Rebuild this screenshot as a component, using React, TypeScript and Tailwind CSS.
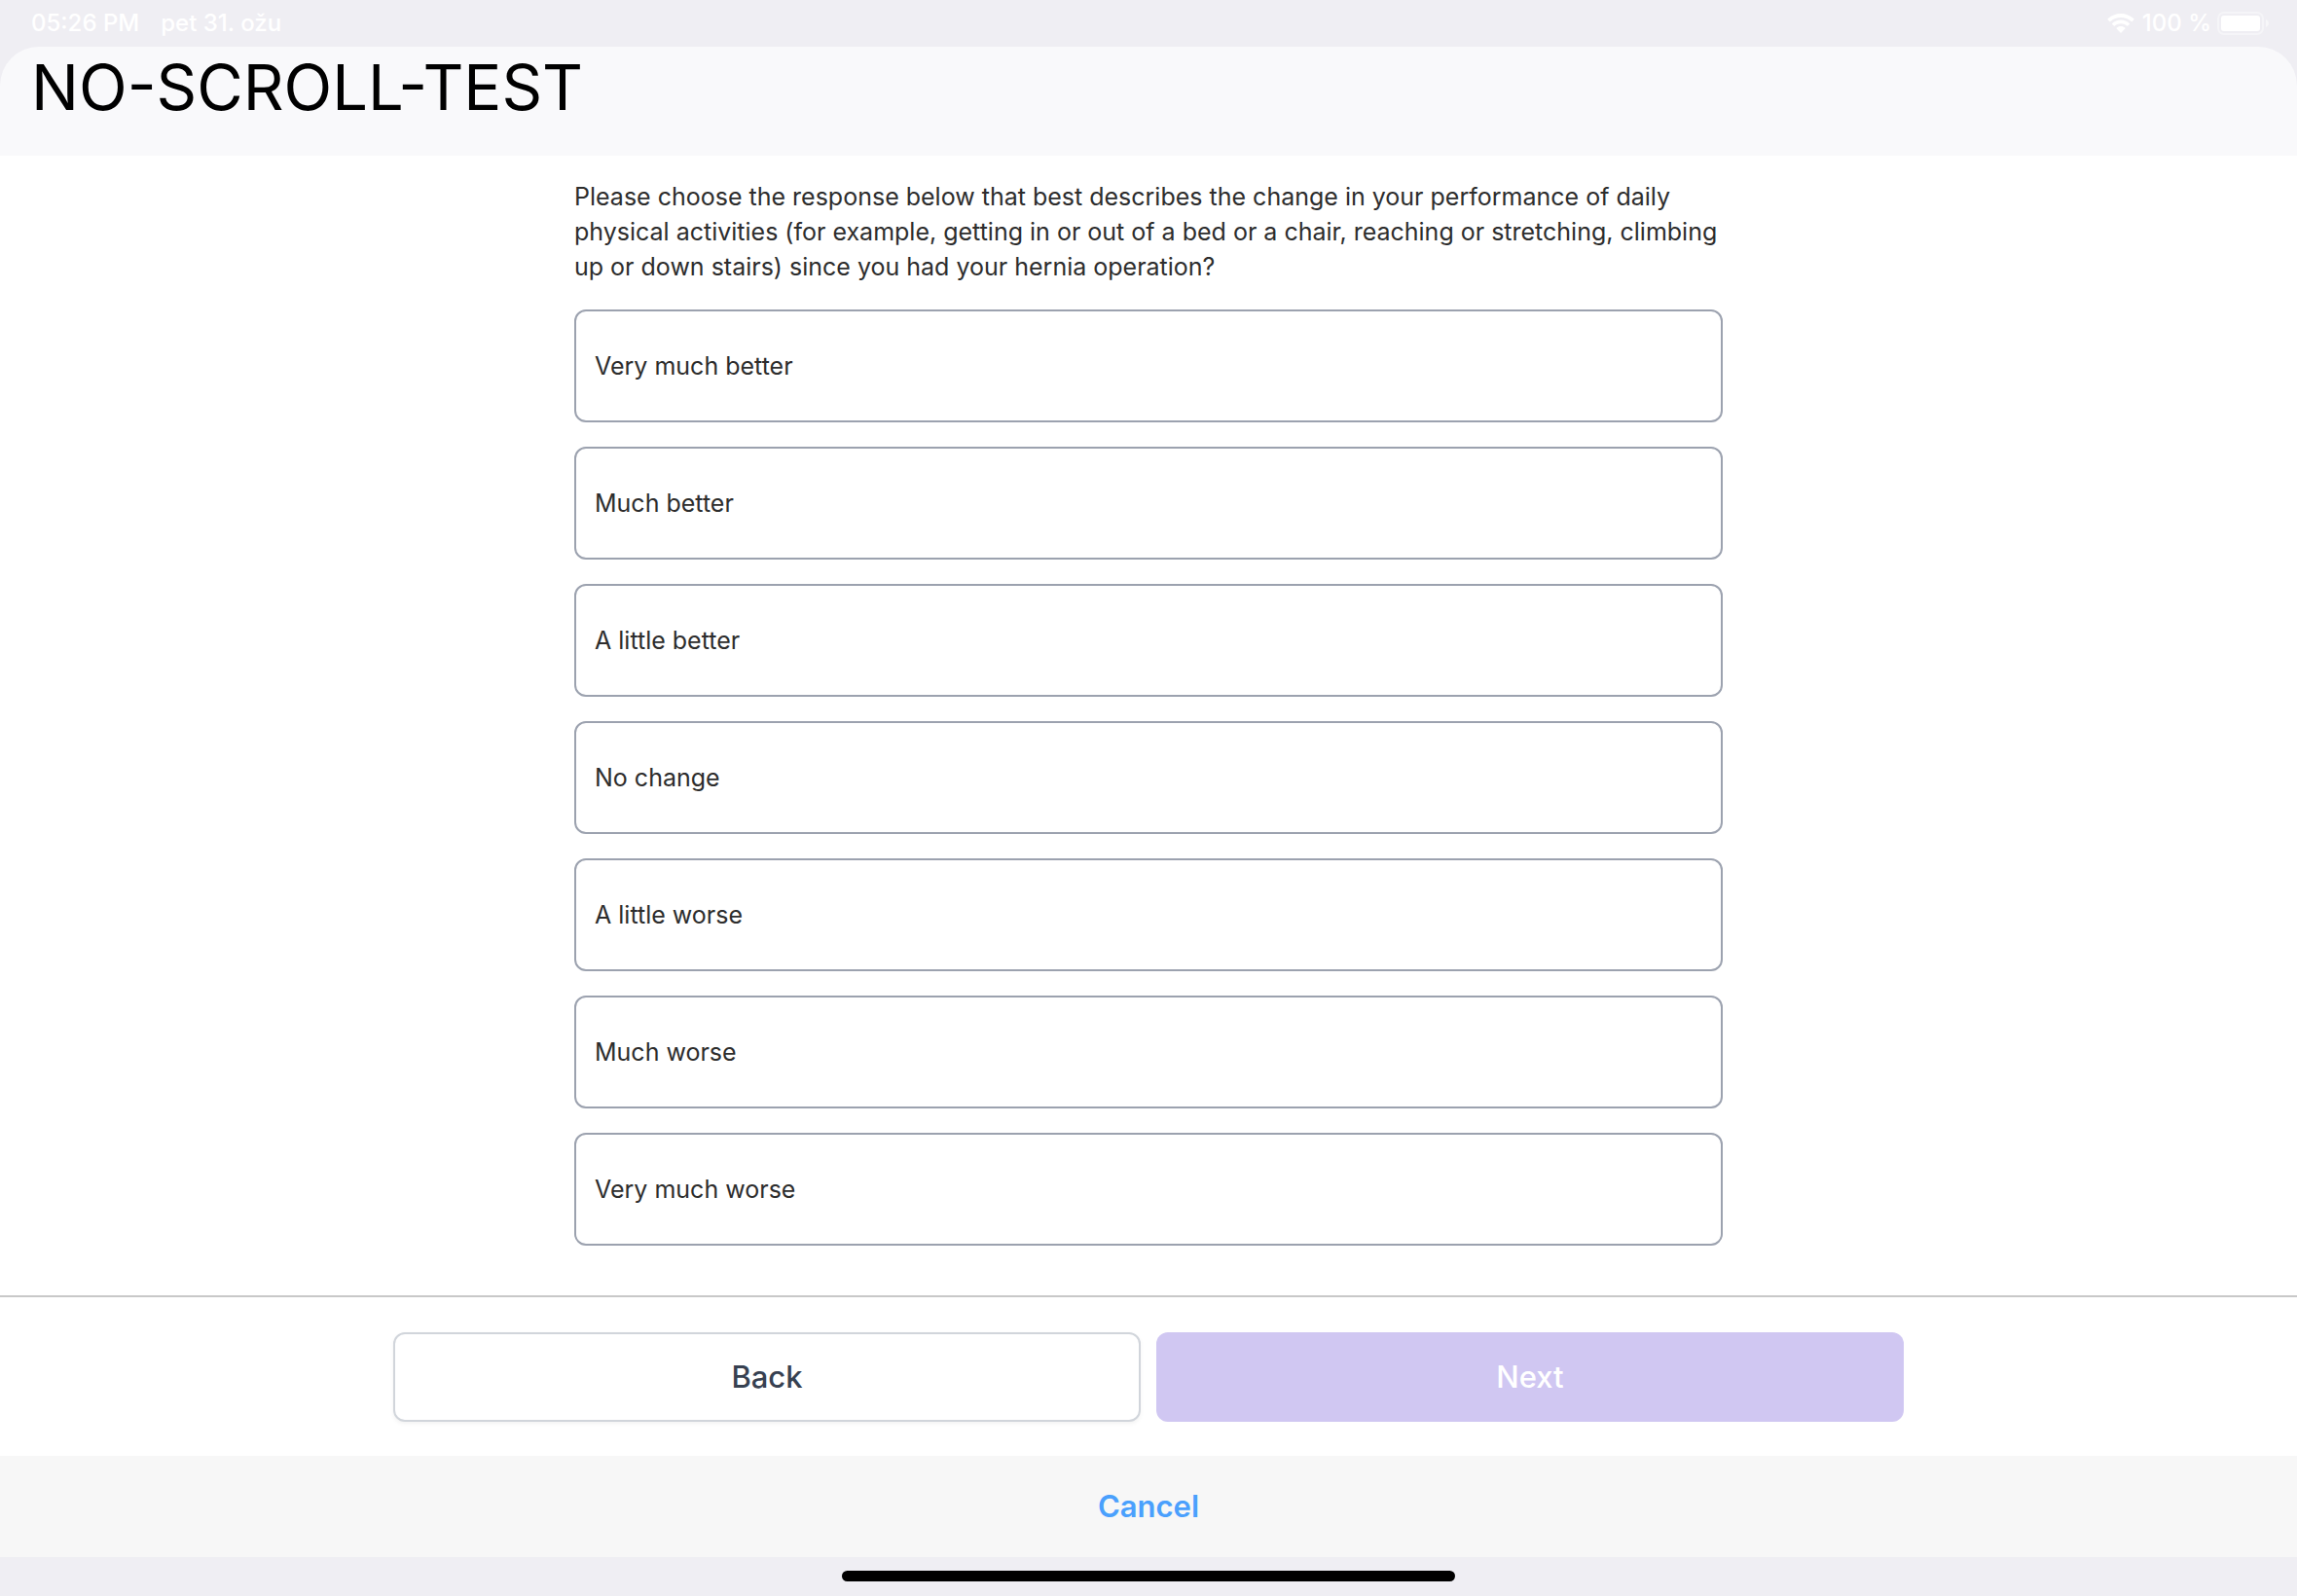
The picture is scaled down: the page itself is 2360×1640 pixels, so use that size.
const options = [
  "Very much better",
  "Much better",
  "A little better",
  "No change",
  "A little worse",
  "Much worse",
  "Very much worse",
];

function WifiIcon() {
  return (
    <svg viewBox="0 0 28 20" className="h-5 w-7" fill="#fff" aria-label="Wi-Fi" role="img">
      <path d="M14 0C8.9 0 4.2 2 0.6 5.3c-.3.3-.3.7 0 1l1.700 1.700c.3.3.7.3 1 0C6.200 5.300 9.900 3.900 14 3.900s7.800 1.400 10.700 4.100c.3.300.7.300 1 0l1.700-1.700c.3-.3.3-.7 0-1C23.800 2 19.100 0 14 0z" />
      <path d="M14 6.500c-3.400 0-6.500 1.300-8.800 3.400-.3.300-.3.700 0 1l1.700 1.700c.3.300.7.300 1 0 1.600-1.500 3.700-2.300 6.100-2.300s4.500.8 6.100 2.300c.3.300.7.300 1 0l1.700-1.700c.3-.3.3-.7 0-1C20.500 7.800 17.400 6.500 14 6.500z" />
      <path d="M14 13c-1.700 0-3.200.6-4.300 1.500-.3.300-.3.700 0 1l3.800 3.900c.3.300.7.300 1 0l3.800-3.900c.3-.3.3-.7 0-1C17.200 13.600 15.700 13 14 13z" />
    </svg>
  );
}

function BatteryIcon() {
  return (
    <svg viewBox="0 0 54 24" className="h-6 w-[54px]" aria-label="Battery" role="img">
      <rect x="1" y="1" width="46" height="22" rx="6" fill="none" stroke="#fff" strokeOpacity="0.4" strokeWidth="2" />
      <rect x="4" y="4" width="40" height="16" rx="3" fill="#fff" />
      <path d="M50 8c1.800.7 3 2.300 3 4s-1.200 3.300-3 4z" fill="#fff" fillOpacity="0.5" />
    </svg>
  );
}

export default function App() {
  return (
    <div className="flex min-h-screen flex-col bg-[#efeef3] font-['Inter',sans-serif]">
      <div className="flex h-12 items-center justify-between pr-7 pl-8 text-2xl font-medium text-white">
        <div className="flex gap-[22px]">
          <span>05:26 PM</span>
          <span>pet 31. ožu</span>
        </div>
        <div className="flex items-center gap-1.5">
          <div className="flex items-center gap-2">
            <WifiIcon />
            <span>100 %</span>
          </div>
          <BatteryIcon />
        </div>
      </div>

      <header className="h-28 rounded-t-[40px] bg-[#f9f9fb] px-8">
        <h1 className="text-[65px] leading-[84px] text-black">NO-SCROLL-TEST</h1>
      </header>

      <main className="flex flex-1 flex-col bg-white">
        <section className="mx-auto w-1/2 flex-1 pt-6 text-[25px] leading-9 text-[#2d2d2d]">
          <p id="question">
            Please choose the response below that best describes the change in your performance of daily physical
            activities (for example, getting in or out of a bed or a chair, reaching or stretching, climbing up or down
            stairs) since you had your hernia operation?
          </p>
          <div aria-labelledby="question" role="group" className="mt-[26px] flex flex-col gap-[25px]">
            {options.map((option) => (
              <button
                key={option}
                type="button"
                className="h-29 rounded-xl border-2 border-[#9ca2af] bg-white px-[19px] text-left"
              >
                {option}
              </button>
            ))}
          </div>
        </section>

        <footer className="border-t-2 border-[#c8c8c8] pt-9 pb-[35px]">
          <div className="mx-auto grid max-w-[1552px] grid-cols-2 gap-4 text-[31px] leading-10 font-medium">
            <button
              type="button"
              className="h-23 rounded-xl border-2 border-[#d1d5db] bg-white text-[#374151] shadow-[0_2px_4px_rgba(0,0,0,0.05)]"
            >
              Back
            </button>
            <button type="button" disabled className="h-23 rounded-xl bg-[#d0c7f2] text-white">
              Next
            </button>
          </div>
        </footer>
      </main>

      <div className="flex h-26 items-center justify-center bg-[#f7f7f7]">
        <button type="button" className="text-[31px] leading-10 font-semibold text-[#4aa0fd]">
          Cancel
        </button>
      </div>
      <div className="flex h-10 justify-center pt-[14px]">
        <div className="h-[11px] w-[630px] rounded-full bg-black" />
      </div>
    </div>
  );
}
